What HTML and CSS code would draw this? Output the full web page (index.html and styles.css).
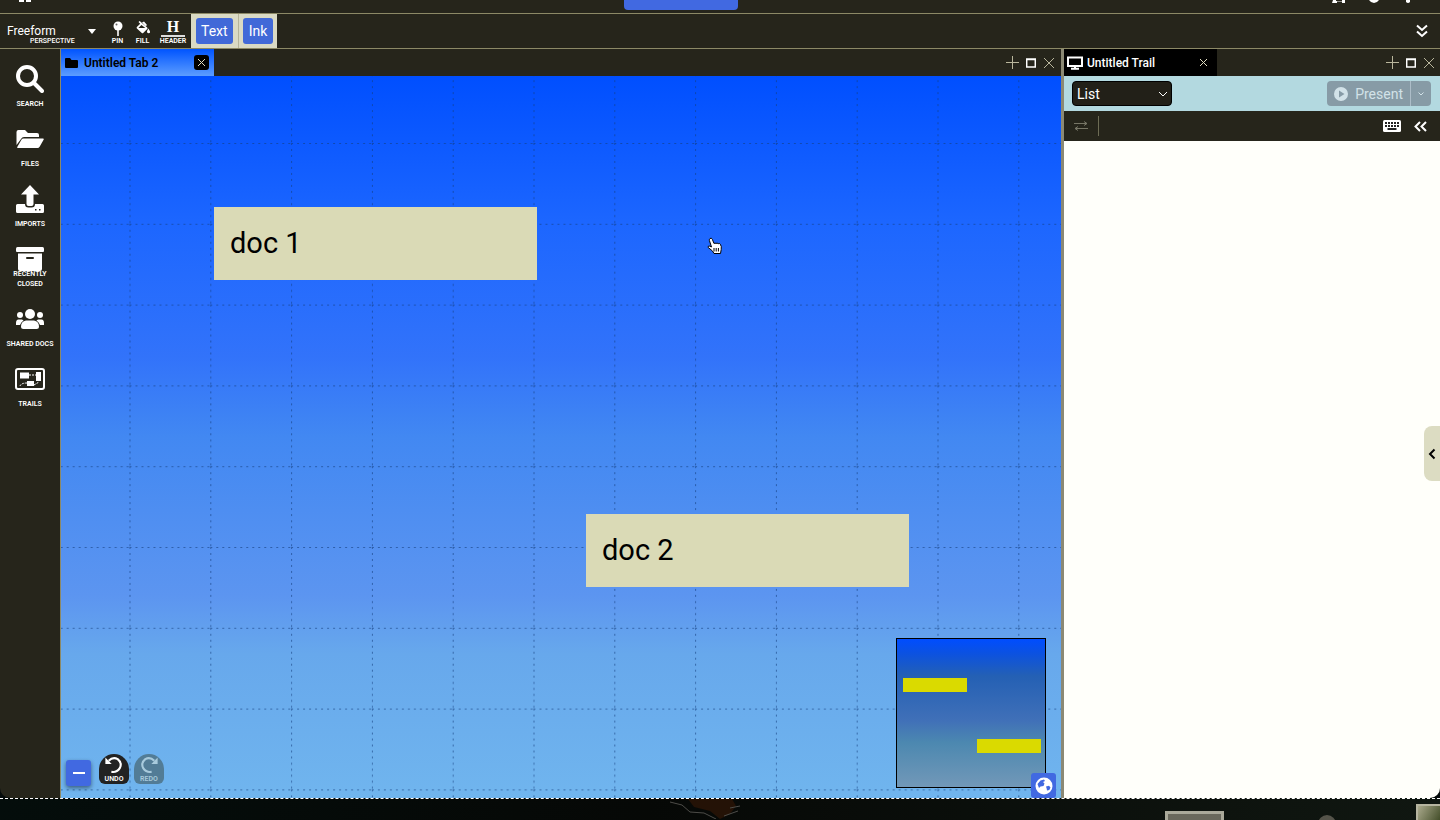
FILE: index.html
```html
<!DOCTYPE html>
<html lang="en">
<head>
<meta charset="utf-8">
<title>Untitled Tab 2</title>
<link rel="stylesheet" href="styles.css">
</head>
<body>
<div class="window">
  <header class="topstrip">
    <svg class="strip-home" width="12" height="3" viewBox="0 0 12 3"><path d="M0 0h5v2H0zM7 0h5v2H7z"/></svg>
    <span class="share-pill"></span>
    <div class="strip-right">
      <svg width="14" height="3" viewBox="0 0 14 3"><path d="M1 0h3v1h6V0h3v3h-3V1.500H5V3H0z"/></svg>
      <svg width="12" height="3" viewBox="0 0 12 3"><path d="M1 0h10q-2 3-5 3T1 0z"/></svg>
      <svg width="12" height="3" viewBox="0 0 12 3"><path d="M4 0h4v2q-2 2-4 0z"/></svg>
    </div>
  </header>

  <nav class="toolbar">
    <div class="perspective">
      <select id="perspective"><option>Freeform</option></select>
      <label for="perspective">PERSPECTIVE</label>
      <svg class="caret" width="8" height="5" viewBox="0 0 8 5"><path d="M0 0h8L4 5z"/></svg>
    </div>
    <button class="tool tool-pin"><svg width="14" height="16" viewBox="0 0 14 16"><circle cx="7" cy="5" r="4.500"/><path d="M6.200 9h1.600v6H6.200z"/><circle cx="5.500" cy="3.600" r="1" class="ink"/></svg><span>PIN</span></button>
    <button class="tool tool-fill"><svg width="14" height="16" viewBox="0 0 14 16"><path d="m2.500 1 1.200-1 7.500 6.500q.8.700 0 1.400l-4 4q-.7.700-1.400 0L.9 7.400q-.7-.7 0-1.400l3.300-3.200zM5.400 4 2.400 7h7z" fill-rule="evenodd"/><path d="m6 1.500 2-1 3 3.500-1.200 1.200zM12.300 7.500q3.400 4.500.2 4.800-3-.3-.2-4.800"/></svg><span>FILL</span></button>
    <button class="tool tool-header"><b>H</b><i></i><span>HEADER</span></button>
    <div class="mode"><button>Text</button></div>
    <div class="mode"><button>Ink</button></div>
    <button class="expand" aria-label="Expand toolbar"><svg width="12" height="14" viewBox="0 0 12 14"><path d="m1 1.500 5 4.500 5-4.500M1 7.500 6 12l5-4.500"/></svg></button>
  </nav>

  <main class="workspace">
    <aside class="sidebar">
      <button><svg width="28" height="28" viewBox="0 0 28 28"><circle cx="11" cy="11" r="9" fill="none" class="thick"/><path d="m18 18 8 8" class="thick"/></svg><span>SEARCH</span></button>
      <button><svg width="28" height="28" viewBox="0 0 28 28"><path d="M.5 20V7q0-2 2-2H9l3 3h9q2 0 2 2v2H8q-2 0-3 2z"/><path d="M7.500 13.500H27q1.200 0 .6 1.200l-4 7q-.8 1.300-2 1.300H2q-1.200 0-.6-1.200l4-7q.8-1.300 2.100-1.300z"/></svg><span>FILES</span></button>
      <button><svg width="28" height="28" viewBox="0 0 28 28"><path d="m14 0 9 9.500h-5.500V19q0 2-2 2h-3q-2 0-2-2V9.500H5z"/><path fill-rule="evenodd" d="M1.500 19H9q0 3.500 3.500 3.500h3Q19 22.500 19 19h7.500q1.500 0 1.500 1.500v6q0 1.500-1.500 1.500h-25Q0 28 0 26.500v-6Q0 19 1.500 19zM19 24v1.500h1.500V24zm4 0v1.500h1.500V24z"/></svg><span>IMPORTS</span></button>
      <button><svg width="28" height="28" viewBox="0 0 28 28"><path d="M1.500 2h25Q28 2 28 3.500V6q0 1-1 1H1Q0 7 0 6V3.500Q0 2 1.500 2z"/><path fill-rule="evenodd" d="M2 8.500h24V24q0 2-2 2H4q-2 0-2-2zM11 12q-1 0-1 1t1 1h6q1 0 1-1t-1-1z"/></svg><span>RECENTLY<br>CLOSED</span></button>
      <button><svg width="28" height="28" viewBox="0 0 28 28"><circle cx="14" cy="9" r="5"/><circle cx="4" cy="10" r="3"/><circle cx="24" cy="10" r="3"/><path d="M10 15.500h8q5 1 5 6 0 2.500-2.500 2.500h-13Q5 24 5 21.500q0-5 5-6zM2.500 14.500H6l1.500 1Q5 17 4 20H0v-2q0-3.500 2.500-3.500zM25.500 14.500H22l-1.500 1Q23 17 24 20h4v-2q0-3.500-2.500-3.500z"/></svg><span>SHARED DOCS</span></button>
      <button><svg width="32" height="28" viewBox="0 0 32 28"><rect x="2" y="4" width="28" height="20" rx="2" class="outline"/><path d="M6 7.500h9v6H6zM22 7h5v9h-5zM13 16h7v5h-7z"/><path d="M15 10h7M6 21q1-3 7-3m7 2 5-3" class="dash"/></svg><span>TRAILS</span></button>
    </aside>

    <section class="pane">
      <div class="tabs">
        <div class="tab">
          <svg class="folder" width="13" height="12" viewBox="0 0 13 12"><path d="M0 2q0-1 1-1h4l1.500 2H12q1 0 1 1v6q0 1-1 1H1q-1 0-1-1z"/></svg>
          <span>Untitled Tab 2</span>
          <button class="close" aria-label="Close tab"><svg width="9" height="9" viewBox="0 0 9 9"><path d="m1 1 7 7M8 1 1 8"/></svg></button>
        </div>
        <div class="pane-tools">
          <button aria-label="Add"><svg width="14" height="14" viewBox="0 0 14 14"><path d="M7.500 0v13M1 6.500h13" class="thin"/></svg></button>
          <button aria-label="Maximize"><svg width="10" height="10" viewBox="0 0 10 10"><path d="M.7 1h8.600v8H.7zM0 1.500h10" class="frame"/></svg></button>
          <button aria-label="Close"><svg width="10" height="10" viewBox="0 0 10 10"><path d="m0 0 10 10M10 0 0 10" class="thin"/></svg></button>
        </div>
      </div>
      <div class="canvas">
        <svg class="grid" width="100%" height="100%">
          <defs><pattern id="cells" x="68.500" y="67" width="80.800" height="80.800" patternUnits="userSpaceOnUse"><path d="M.5 0v80.800M0 .5h80.800"/></pattern></defs>
          <rect width="100%" height="100%" fill="url(#cells)"/>
        </svg>
        <article class="doc doc-one">doc 1</article>
        <article class="doc doc-two">doc 2</article>
        <svg class="pointer" width="16" height="18" viewBox="0 0 16 18"><path d="M3 1.500q1.500-1 2.300.8L7 6.500q1-1 2 0 1-1 2.200.2 1.300-.8 2.100.5 1.500 2 .9 5.300l-.7 4H7L5.500 14 1.200 10.500q-.5-1.500 1-1.500L4.500 10 2.400 3.500Q2.200 2 3 1.500z"/><path d="M7 11v3.500M9.200 11v3.500m2.200-3.500v3.500"/></svg>
        <button class="collapse" aria-label="Collapse"><i></i></button>
        <div class="history">
          <button><svg width="20" height="19" viewBox="0 0 18 18"><path d="M4 4.500q4-4 8.500-1.500 4.500 3.500 2 8.500-3 4.500-8 3.500" fill="none"/><path d="M.8 1.500v6h6z" class="solid"/></svg><span>UNDO</span></button>
          <button disabled><svg width="20" height="19" viewBox="0 0 18 18"><path d="M14 4.500Q10 .5 5.500 3 1 6.500 3.500 11.500q3 4.500 8 3.500" fill="none"/><path d="M17.200 1.500v6h-6z" class="solid"/></svg><span>REDO</span></button>
        </div>
        <div class="minimap">
          <i class="mini mini-one"></i><i class="mini mini-two"></i>
          <button class="globe" aria-label="Toggle map"><svg width="18" height="18" viewBox="0 0 18 18"><circle cx="9" cy="9" r="8.500"/><path d="M2.500 7 5.500 3.500 9 2.500l1 1.500-2 1 1.500 1.500-1 2.500-3 .5L4 11zM11 9.500l3-.8 1.500 1.800-1.200 2.500-2.300.5-.3-1.800z"/></svg></button>
        </div>
      </div>
    </section>

    <section class="trail">
      <div class="tabs">
        <div class="tab tab-dark">
          <svg width="16" height="14" viewBox="0 0 16 14"><path d="M1 1.500h14v8.500H1zM8 10v3M4 12.700h8" class="screen"/></svg>
          <span>Untitled Trail</span>
          <button class="close" aria-label="Close tab"><svg width="9" height="9" viewBox="0 0 9 9"><path d="m1 1 7 7M8 1 1 8"/></svg></button>
        </div>
        <div class="pane-tools">
          <button aria-label="Add"><svg width="14" height="14" viewBox="0 0 14 14"><path d="M7.500 0v13M1 6.500h13" class="thin"/></svg></button>
          <button aria-label="Maximize"><svg width="10" height="10" viewBox="0 0 10 10"><path d="M.7 1h8.600v8H.7zM0 1.500h10" class="frame"/></svg></button>
          <button aria-label="Close"><svg width="10" height="10" viewBox="0 0 10 10"><path d="m0 0 10 10M10 0 0 10" class="thin"/></svg></button>
        </div>
      </div>
      <div class="present-row">
        <div class="view-select">
          <select aria-label="View"><option>List</option></select>
          <svg width="10" height="6" viewBox="0 0 10 6"><path d="m1 1 4 4 4-4"/></svg>
        </div>
        <div class="present">
          <button disabled><svg width="14" height="14" viewBox="0 0 14 14"><path fill-rule="evenodd" d="M7 0a7 7 0 1 0 0 14A7 7 0 0 0 7 0zM5 3.500 10.500 7 5 10.500z"/></svg>Present</button>
          <button disabled class="more" aria-label="More"><svg width="8" height="6" viewBox="0 0 8 6"><path d="m1.500 1.500 2.500 2.500 2.500-2.500" class="chev"/></svg></button>
        </div>
      </div>
      <div class="trail-tools">
        <button aria-label="Swap"><svg width="14" height="10" viewBox="0 0 14 10"><path d="M0 2.500h13M10 .5l3 2-3 2M14 7.500H1m3-2-3 2 3 2" class="dim"/></svg></button>
        <i class="rule"></i>
        <div class="right">
          <button aria-label="Keyboard"><svg width="18" height="12" viewBox="0 0 18 12"><rect width="18" height="12" rx="1.500"/><path d="M2 3h14M2 6h14" class="keys"/><path d="M4.500 9h9" class="bar"/></svg></button>
          <button aria-label="Collapse panel"><svg width="13" height="11" viewBox="0 0 13 11"><path d="m6 1-4.500 4.500L6 10M12 1 7.500 5.500 12 10" class="chevrons"/></svg></button>
        </div>
      </div>
      <div class="trail-list">
        <button class="drawer" aria-label="Open drawer"><svg width="8" height="12" viewBox="0 0 8 12"><path d="M6.500 1.500 2 6l4.500 4.500"/></svg></button>
      </div>
    </section>
  </main>
</div>
<footer class="desktop">
  <svg class="rock" width="90" height="20" viewBox="0 0 90 20"><path d="M26 0h44l4 7-6 8-10 5-10-8-16-4z" fill="#241206"/><path d="m8 3 12 3 8 7 14 1 12 6M68 9l10-2M62 17l14-5" fill="none" stroke="#4d4c48"/></svg>
  <i class="thumb-one"></i><i class="thumb-dot"></i><i class="thumb-two"></i>
</footer>
</body>
</html>
```
FILE: styles.css
```css
* { box-sizing: border-box; }
body {
  margin: 0;
  min-height: 100vh;
  display: flex;
  flex-direction: column;
  overflow: hidden;
  background: #050b0b;
  font-family: Roboto, "Liberation Sans", sans-serif;
  color: #fff;
}
button, select { font: inherit; color: inherit; background: none; border: 0; padding: 0; margin: 0; }
button { display: flex; align-items: center; justify-content: center; }
select { appearance: none; }
svg { display: block; flex: none; fill: currentColor; }

.window {
  flex: 1;
  display: flex;
  flex-direction: column;
  overflow: hidden;
  background: #26251b;
  border-radius: 0 0 10px 10px;
}
.topstrip {
  height: 14px;
  display: grid;
  grid-template-columns: 17fr 114px 19fr;
  align-items: start;
  padding: 0 26px 0 19px;
  border-bottom: 1px solid #8c8966;
}
.share-pill { height: 10px; background: #4169e1; border-radius: 0 0 4px 4px; }
.strip-right { display: flex; justify-content: flex-end; gap: 22px; }

.toolbar { height: 35px; display: flex; border-bottom: 1px solid #8c8966; }
.perspective { position: relative; width: 105px; padding: 9px 0 0 7px; }
.perspective select { display: block; width: 94px; height: 16px; font-size: 12px; line-height: 16px; }
.perspective label { position: absolute; left: 30px; top: 23px; font-size: 7px; line-height: 8px; font-weight: 500; }
.caret { position: absolute; right: 9px; top: 15px; }
.tool { width: 25px; flex-direction: column; justify-content: flex-start; padding-top: 7px; }
.tool span { font-size: 7px; line-height: 8px; font-weight: 600; }
.tool-header { width: 36px; }
.tool-header b { font: bold 16px/12px "Liberation Serif", serif; }
.tool-header i { width: 24px; height: 2px; margin: 2px 0 0; background: #ddd; }
.ink { fill: #666; }
.mode { display: flex; align-items: center; padding: 0 5px; background: #dadac4; border-right: 1px solid #b5b49a; }
.mode button { height: 26px; padding: 0 5px; font-size: 14px; background: #4169d8; border-radius: 3px; }
.mode + .mode { padding: 0 4px; border-right: 0; }
.mode + .mode button { padding: 0 6px; }
.expand { margin-left: auto; padding-right: 12px; }
.expand path { fill: none; stroke: #fff; stroke-width: 2; }

.workspace { flex: 1; display: flex; min-height: 0; }
.sidebar { width: 61px; border-right: 1px solid #8c8966; }
.sidebar button { display: grid; width: 60px; height: 60px; padding-top: 16px; justify-items: center; }
.sidebar svg, .sidebar span { grid-area: 1 / 1; }
.sidebar svg { align-self: start; }
.sidebar span { align-self: end; font-size: 7px; line-height: 10px; font-weight: 600; text-align: center; white-space: nowrap; }
.thick { stroke: #fff; stroke-width: 4; stroke-linecap: round; }
.outline { fill: none; stroke: #fff; stroke-width: 2; }
.dash { fill: none; stroke: #fff; stroke-dasharray: 2 1; }

.pane { flex: 1; min-width: 0; display: flex; flex-direction: column; border-right: 3px solid #8b8974; }
.tabs { height: 27px; display: flex; justify-content: space-between; }
.tab {
  width: 153px;
  display: flex;
  align-items: center;
  gap: 6px;
  padding: 0 5px 0 4px;
  color: #000;
  background: linear-gradient(#0054ff, #5c9dff);
  font-size: 12px;
  line-height: 14px;
  font-weight: 600;
}
.close { width: 15px; height: 15px; margin-left: auto; border-radius: 3px; background: #000; }
.close path { stroke: #e0dcc0; }
.tab-dark { color: #fff; background: #000; font-weight: 500; gap: 4px; padding: 0 6px 0 3px; }
.screen { fill: none; stroke: #fff; stroke-width: 2; }
.pane-tools { display: flex; align-items: center; gap: 8px; padding-right: 7px; }
.trail .pane-tools { padding-right: 6px; }
.pane-tools button:first-child { margin-right: -1px; }
.thin { stroke: #b9b69c; }
.frame { fill: none; stroke: #fff; stroke-width: 1.5; }

.canvas { position: relative; flex: 1; background: linear-gradient(#004fff, #1c66ff 20%, #3273fa 39%, #4288f2 50%, #5c95f0 72%, #67a8ec 80%, #70b5ee); }
.grid { position: absolute; inset: 0; }
.grid path { fill: none; stroke: #123c7c; stroke-opacity: .6; stroke-dasharray: 2 4; }
.doc { position: absolute; width: 323px; height: 73px; padding: 0 16px; font-size: 29px; line-height: 72px; color: #000; background: #dadab6; }
.doc-one { left: 153px; top: 131px; }
.doc-two { left: 525px; top: 438px; }
.pointer { position: absolute; left: 646px; top: 161px; fill: #fff; stroke: #000; }
.collapse { position: absolute; left: 5px; bottom: 12px; width: 25px; height: 26px; background: #4169e1; border-radius: 3px; box-shadow: 0 2px 4px #0007; }
.collapse i { width: 12px; height: 2px; background: #fff; }
.history { position: absolute; left: 38px; bottom: 14px; display: flex; gap: 5px; }
.history button { width: 30px; height: 30px; flex-direction: column; background: #222; border-radius: 15px 15px 6px 6px; }
.history button:disabled { background: #527c96; color: #a8cadc; }
.history svg { stroke: currentColor; stroke-width: 2; }
.history .solid { stroke: none; }
.history span { font-size: 7px; line-height: 8px; font-weight: 600; }
.minimap { position: absolute; right: 15px; bottom: 10px; width: 150px; height: 150px; border: 1px solid #000; background: linear-gradient(#004dff, #0c52e0 10%, #2460b4 25%, #4070b8 55%, #4c88b0 70%, #7298b8); }
.mini { position: absolute; width: 64px; height: 14px; background: #dada00; }
.mini-one { left: 6px; top: 39px; }
.mini-two { right: 4px; bottom: 34px; }
.globe { position: absolute; right: -11px; bottom: -11px; width: 25px; height: 25px; background: #4169e1; border-radius: 3px; }
.globe path { fill: #4169e1; }

.trail { width: 376px; display: flex; flex-direction: column; }
.present-row { height: 35px; display: flex; align-items: center; justify-content: space-between; padding: 0 9px 0 8px; background: #b3d9e0; }
.view-select { position: relative; width: 100px; height: 25px; background: #222018; border: 1px solid #000; border-radius: 4px; }
.view-select select { width: 100%; height: 23px; padding: 0 4px; font-size: 14px; }
.view-select svg { position: absolute; right: 3px; top: 9px; fill: none; stroke: #fff; }
.present { height: 25px; display: flex; color: #d2e2e8; background: #879ba6; border-radius: 4px; font-size: 14px; }
.present button { gap: 7px; padding: 0 7px; }
.present .more { width: 21px; padding: 0; border-left: 1px solid #adbdc8; }
.chev { fill: none; stroke: currentColor; }
.trail-tools { height: 30px; display: flex; align-items: center; gap: 9px; padding: 0 13px 0 10px; }
.rule { width: 1px; height: 20px; margin-left: 1px; background: #6d6c55; }
.dim { fill: none; stroke: #777666; }
.right { display: flex; gap: 13px; margin-left: auto; }
.keys { stroke: #222; stroke-width: 2; stroke-dasharray: 2 1; }
.bar { stroke: #222; stroke-width: 2; }
.chevrons { fill: none; stroke: #fff; stroke-width: 2; }
.trail-list { position: relative; flex: 1; background: #fffffa; }
.drawer { position: absolute; right: 0; top: 285px; width: 16px; height: 55px; background: #dcdcc2; border-radius: 8px 0 0 8px; }
.drawer path { fill: none; stroke: #000; stroke-width: 2; }

.desktop { position: relative; height: 22px; border-top: 1px dashed #fff; background: linear-gradient(90deg, #040d0b, #060806 45%, #101711); overflow: hidden; }
.rock { position: absolute; left: 46%; top: 0; }
.thumb-one { position: absolute; right: 216px; top: 12px; width: 59px; height: 20px; border: 3px solid #aaa99a; background: #69685c; }
.thumb-dot { position: absolute; right: 104px; top: 16px; width: 18px; height: 18px; border-radius: 50%; background: #55544a; }
.thumb-two { position: absolute; right: 0; top: 5px; width: 24px; height: 20px; border: 2px solid #b6b5a0; border-right: 0; background: linear-gradient(120deg, #aaa98c, #404b26); }
```
